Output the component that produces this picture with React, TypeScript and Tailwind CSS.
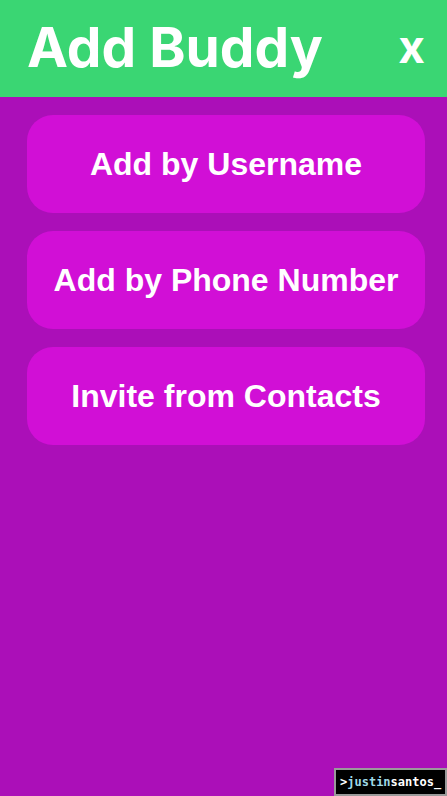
import React from 'react';

const options = ['Add by Username', 'Add by Phone Number', 'Invite from Contacts'];

export default function App() {
  return (
    <div className="relative flex h-[796px] w-[447px] flex-col overflow-hidden bg-[#ab0fb8] font-['Inter','Liberation_Sans',sans-serif]">
      {/* Header */}
      <div className="flex h-[97px] shrink-0 items-center justify-between bg-[#3ad673] pl-[27px] pr-[22px]">
        <h1 className="pb-[2px] text-[55px] font-bold leading-none text-white">Add Buddy</h1>
        <button className="pb-[6px] text-[46px] font-bold leading-none text-white">x</button>
      </div>

      {/* Options */}
      <div className="flex flex-col gap-[18px] pl-[27px] pr-[22px] pt-[18px]">
        {options.map((label) => (
          <button
            key={label}
            className="flex h-[98px] items-center justify-center rounded-[26px] bg-[#d10fd6] font-['Liberation_Sans',sans-serif] text-[32px] font-bold text-white"
          >
            {label}
          </button>
        ))}
      </div>

      {/* Watermark */}
      <div className="absolute bottom-0 right-0 flex h-[28px] w-[113px] items-center border-2 border-[#9a9a9a] bg-black pl-[4px] font-['DejaVu_Sans_Mono',monospace] text-[12px] font-bold">
        <span className="text-white">&gt;</span>
        <span className="text-[#9fd8e6]">justin</span>
        <span className="text-white">santos_</span>
      </div>
    </div>
  );
}
